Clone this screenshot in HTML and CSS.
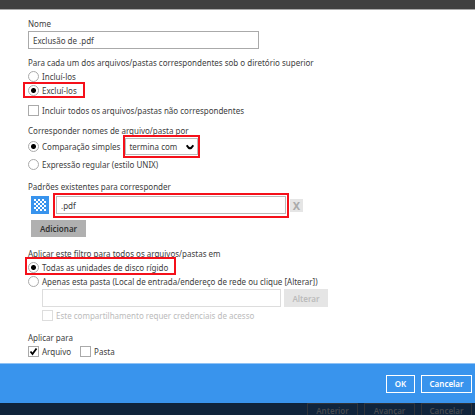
FILE: index.html
```html
<!DOCTYPE html>
<html lang="pt-BR">
<head>
<meta charset="utf-8">
<meta name="viewport" content="width=device-width, initial-scale=1">
<title>Exclusão de .pdf</title>
<link rel="stylesheet" href="styles.css">
</head>
<body>
<form class="dialog">
  <div class="topbar"></div>
  <main class="content">
    <section class="group">
      <label class="row" for="name">Nome</label>
      <input class="text name" id="name" type="text" value="Exclusão de .pdf">
    </section>

    <section class="group">
      <p class="row">Para cada um dos arquivos/pastas correspondentes sob o diretório superior</p>
      <label class="row choice"><input type="radio" name="mode">Incluí-los</label>
      <label class="row choice marked marked-exclude"><input type="radio" name="mode" checked>Excluí-los</label>
    </section>

    <section class="group">
      <label class="row choice"><input type="checkbox">Incluir todos os arquivos/pastas não correspondentes</label>
    </section>

    <section class="group">
      <p class="row">Corresponder nomes de arquivo/pasta por</p>
      <div class="row tall">
        <label class="choice"><input type="radio" name="match" checked>Comparação simples</label>
        <span class="select marked marked-select">
          <select aria-label="Tipo de comparação"><option>termina com</option></select>
          <svg class="chevron" viewBox="0 0 8 6" aria-hidden="true"><path d="M.7 1.300L2.500 3.600Q4 4.800 5.500 3.600L7.300 1.300"/></svg>
        </span>
      </div>
      <label class="row tall choice"><input type="radio" name="match">Expressão regular (estilo UNIX)</label>
    </section>

    <section class="group">
      <label class="row" for="pattern">Padrões existentes para corresponder</label>
      <div class="pattern">
        <svg class="tile" viewBox="0 0 18 18" aria-hidden="true">
          <defs>
            <pattern id="checks" x="3" y="3" width="4" height="4" patternUnits="userSpaceOnUse">
              <path fill="#fff" d="M0 0h2v2H0zM2 2h2v2H2z"/>
            </pattern>
          </defs>
          <path fill="#3994ed" d="M0 0h18v18H0z"/>
          <path fill="url(#checks)" d="M3 3h12v12H3z"/>
        </svg>
        <span class="field marked marked-field"><input class="text" id="pattern" type="text" value=".pdf"></span>
        <button class="remove" type="button" aria-label="Remover">X</button>
      </div>
      <button class="add" type="button">Adicionar</button>
    </section>

    <section class="group scope">
      <p class="row">Aplicar este filtro para todos os arquivos/pastas em</p>
      <label class="row choice marked marked-drives"><input type="radio" name="scope" checked>Todas as unidades de disco rígido</label>
      <label class="row choice"><input type="radio" name="scope">Apenas esta pasta (Local de entrada/endereço de rede ou clique [Alterar])</label>
      <div class="folder">
        <input class="text" type="text" aria-label="Pasta" disabled>
        <button class="change" type="button" disabled>Alterar</button>
      </div>
      <label class="row choice share"><input type="checkbox" disabled>Este compartilhamento requer credenciais de acesso</label>
    </section>

    <section class="group">
      <p class="row">Aplicar para</p>
      <div class="row kinds">
        <label class="choice"><input type="checkbox" checked>Arquivo</label>
        <label class="choice"><input type="checkbox">Pasta</label>
      </div>
    </section>
  </main>
  <footer class="actions">
    <button class="ok" type="submit">OK</button>
    <button type="button">Cancelar</button>
  </footer>
  <div class="behind">
    <button type="button" disabled>Anterior</button>
    <button type="button" disabled>Avançar</button>
    <button type="button" disabled>Cancelar</button>
  </div>
</form>
</body>
</html>
```

FILE: styles.css
```css
* {
  box-sizing: border-box;
}

body,
p {
  margin: 0;
}

body,
input,
select,
button {
  font-family: "Noto Sans", "Open Sans", sans-serif;
  font-size: 8px;
  line-height: 13px;
  color: #404040;
}

.dialog {
  display: flex;
  flex-direction: column;
  height: 100vh;
  overflow: hidden;
  background: #fff;
}

.topbar {
  flex: none;
  height: 10px;
  background: #404040;
  border-bottom: 1px solid #aaa;
}

.content {
  flex: none;
  display: flex;
  flex-direction: column;
  gap: 7px;
  padding: 7px 28px 5px;
}

.group {
  display: flex;
  flex-direction: column;
  align-items: flex-start;
  gap: 1px;
}

.row {
  display: flex;
  align-items: center;
  height: 13px;
  white-space: nowrap;
}

.tall {
  height: 17px;
}

.choice {
  display: flex;
  align-items: center;
  gap: 3px;
}

input,
select,
button {
  appearance: none;
  margin: 0;
  border-radius: 0;
}

input[type="radio"],
input[type="checkbox"] {
  flex: none;
  width: 11px;
  height: 11px;
  border: 1px solid #aaa;
  background: #fff;
}

input[type="radio"] {
  border-radius: 50%;
}

input[type="radio"]:checked {
  background: radial-gradient(circle, #000 2px, #fff 3px);
}

input[type="checkbox"]:checked {
  background: #fff url("data:image/svg+xml,%3Csvg xmlns='http://www.w3.org/2000/svg' viewBox='0 0 9 9'%3E%3Cpath d='M1.500 4.500L3.500 7L7.500 1.500' fill='none' stroke='%23000' stroke-width='1.800'/%3E%3C/svg%3E");
}

input[type="checkbox"]:disabled {
  border-color: #ddd;
}

.text {
  width: 100%;
  height: 18px;
  padding: 0 4px;
  border: 1px solid #aaa;
  background: #fff;
}

.name {
  max-width: 231px;
}

.marked {
  position: relative;
}

.marked::after {
  content: "";
  position: absolute;
  border: 2px solid #f5101a;
  pointer-events: none;
}

.marked-exclude::after {
  inset: -2px -8px -1px -5px;
}

.marked-select::after {
  inset: -3px -2px;
}

.marked-field::after {
  inset: -3px -3px -4px;
}

.marked-drives::after {
  inset: -4px -8px -1px -3px;
}

.select {
  margin-left: 5px;
}

select {
  display: block;
  width: 73px;
  height: 17px;
  padding: 0 3px;
  border: 1px solid #bbb;
  background: #fff;
}

.chevron {
  position: absolute;
  top: 6px;
  right: 4px;
  width: 8px;
  height: 6px;
  fill: none;
  stroke: #000;
  stroke-width: 2;
}

.pattern {
  display: flex;
  align-items: center;
  width: 100%;
  margin-top: 2px;
  padding-left: 3px;
}

.tile {
  flex: none;
  width: 18px;
  height: 18px;
}

.field {
  flex: 0 1 230px;
  margin: 0 4px 0 7px;
}

.field .text {
  display: block;
  border-color: #bbb;
}

button {
  padding: 0;
  border: 0;
  font-weight: 600;
}

.remove {
  width: 13px;
  height: 13px;
  background: #e5e5e5;
  color: #aaa;
  font-size: 11px;
  font-weight: 700;
}

.add {
  width: 55px;
  height: 17px;
  margin: 5px 0 0 3px;
  background: #b0b0b0;
  color: #333;
}

.scope {
  margin: 3px 0 2px;
}

.folder {
  display: flex;
  gap: 3px;
  width: 100%;
  margin-bottom: 1px;
  padding-left: 14px;
}

.folder .text {
  flex: 0 1 239px;
  min-width: 0;
  border-color: #ddd;
}

.change {
  width: 44px;
  height: 18px;
  background: #e5e5e5;
  color: #bbb;
}

.share {
  padding-left: 14px;
  color: #bbb;
}

.kinds {
  gap: 9px;
}

.actions,
.behind {
  flex: none;
  display: flex;
  justify-content: flex-end;
  gap: 6px;
  padding: 0 3px;
}

.actions {
  align-items: center;
  height: 40px;
  background: #3994ed;
  border-top: 1px solid #8fc2f5;
}

.actions button,
.behind button {
  width: 51px;
  height: 18px;
  background: transparent;
  border: 1px solid #fff;
  color: #fff;
}

.actions .ok {
  width: 29px;
}

.behind {
  flex: 1;
  background: #10243b;
}

.behind button {
  height: 15px;
  line-height: 11px;
  border-color: #30343a;
  color: #454a50;
}
```
